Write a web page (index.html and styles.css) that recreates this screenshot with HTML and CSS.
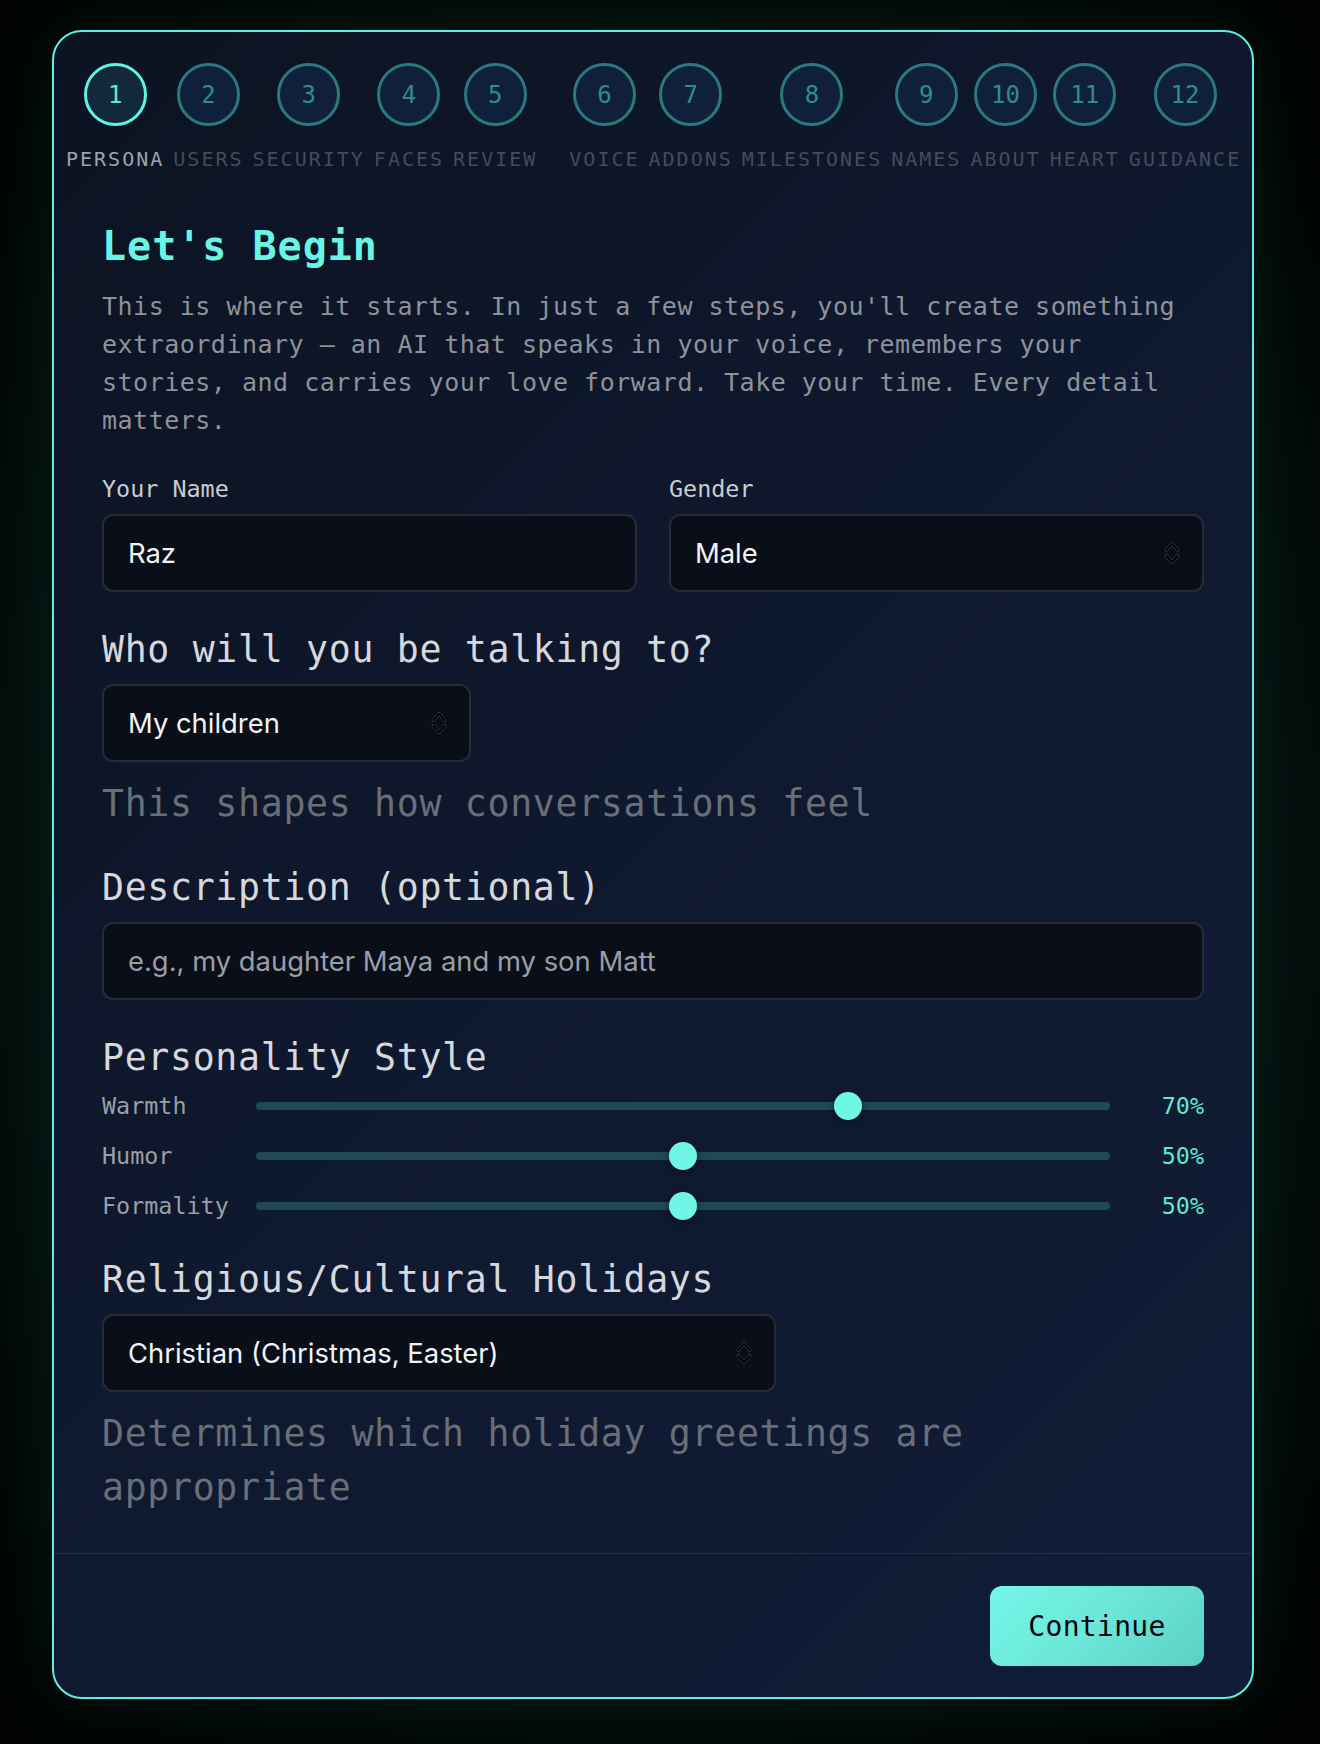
FILE: index.html
```html
<!DOCTYPE html>
<html lang="en">
<head>
<meta charset="utf-8">
<title>Let's Begin</title>
<link rel="stylesheet" href="styles.css">
</head>
<body>
<main class="card">
  <nav class="steps">
    <div class="step is-active"><span class="step-num">1</span><span class="step-label">PERSONA</span></div>
    <div class="step"><span class="step-num">2</span><span class="step-label">USERS</span></div>
    <div class="step"><span class="step-num">3</span><span class="step-label">SECURITY</span></div>
    <div class="step"><span class="step-num">4</span><span class="step-label">FACES</span></div>
    <div class="step"><span class="step-num">5</span><span class="step-label">REVIEW</span></div>
    <div class="step step-break"><span class="step-num">6</span><span class="step-label">VOICE</span></div>
    <div class="step"><span class="step-num">7</span><span class="step-label">ADDONS</span></div>
    <div class="step"><span class="step-num">8</span><span class="step-label">MILESTONES</span></div>
    <div class="step"><span class="step-num">9</span><span class="step-label">NAMES</span></div>
    <div class="step"><span class="step-num">10</span><span class="step-label">ABOUT</span></div>
    <div class="step"><span class="step-num">11</span><span class="step-label">HEART</span></div>
    <div class="step"><span class="step-num">12</span><span class="step-label">GUIDANCE</span></div>
  </nav>

  <section class="content">
    <h1 class="title">Let's Begin</h1>
    <p class="intro">This is where it starts. In just a few steps, you'll create something extraordinary — an AI that speaks in your voice, remembers your stories, and carries your love forward. Take your time. Every detail matters.</p>

    <div class="group name-row">
      <label class="field">
        <span class="field-label">Your Name</span>
        <input class="control" type="text" value="Raz">
      </label>
      <label class="field">
        <span class="field-label">Gender</span>
        <span class="select-wrap">
          <select class="control">
            <option selected>Male</option>
            <option>Female</option>
            <option>Other</option>
          </select>
          <svg class="chev" width="16" height="22" viewBox="0 0 16 22" aria-hidden="true"><path d="M2.4 8.2 L8 1.8 L13.6 8.2 M2.4 13.8 L8 20.2 L13.6 13.8" fill="none" stroke="#454a53" stroke-width="3.2" stroke-linecap="round" stroke-linejoin="round"/><path d="M2.4 8.2 L8 1.8 L13.6 8.2 M2.4 13.8 L8 20.2 L13.6 13.8" fill="none" stroke="#000" stroke-width="2.1" stroke-linecap="round" stroke-linejoin="round"/></svg>
        </span>
      </label>
    </div>

    <div class="group">
      <h2 class="section-title">Who will you be talking to?</h2>
      <span class="select-wrap select-who">
        <select class="control">
          <option selected>My children</option>
          <option>My grandchildren</option>
          <option>My partner or spouse</option>
        </select>
        <svg class="chev" width="16" height="22" viewBox="0 0 16 22" aria-hidden="true"><path d="M2.4 8.2 L8 1.8 L13.6 8.2 M2.4 13.8 L8 20.2 L13.6 13.8" fill="none" stroke="#454a53" stroke-width="3.2" stroke-linecap="round" stroke-linejoin="round"/><path d="M2.4 8.2 L8 1.8 L13.6 8.2 M2.4 13.8 L8 20.2 L13.6 13.8" fill="none" stroke="#000" stroke-width="2.1" stroke-linecap="round" stroke-linejoin="round"/></svg>
      </span>
      <p class="hint">This shapes how conversations feel</p>
    </div>

    <div class="group">
      <h2 class="section-title">Description (optional)</h2>
      <input class="control" type="text" placeholder="e.g., my daughter Maya and my son Matt">
    </div>

    <div class="group">
      <h2 class="section-title">Personality Style</h2>
      <div class="sliders">
        <div class="slider-row">
          <span class="slider-label">Warmth</span>
          <input class="range" type="range" min="0" max="100" value="70">
          <span class="slider-value">70%</span>
        </div>
        <div class="slider-row">
          <span class="slider-label">Humor</span>
          <input class="range" type="range" min="0" max="100" value="50">
          <span class="slider-value">50%</span>
        </div>
        <div class="slider-row">
          <span class="slider-label">Formality</span>
          <input class="range" type="range" min="0" max="100" value="50">
          <span class="slider-value">50%</span>
        </div>
      </div>
    </div>

    <div class="group">
      <h2 class="section-title">Religious/Cultural Holidays</h2>
      <span class="select-wrap select-holidays">
        <select class="control">
          <option selected>Christian (Christmas, Easter)</option>
          <option>Jewish (Hanukkah, Passover)</option>
          <option>Muslim (Eid al-Fitr, Eid al-Adha)</option>
        </select>
        <svg class="chev" width="16" height="22" viewBox="0 0 16 22" aria-hidden="true"><path d="M2.4 8.2 L8 1.8 L13.6 8.2 M2.4 13.8 L8 20.2 L13.6 13.8" fill="none" stroke="#454a53" stroke-width="3.2" stroke-linecap="round" stroke-linejoin="round"/><path d="M2.4 8.2 L8 1.8 L13.6 8.2 M2.4 13.8 L8 20.2 L13.6 13.8" fill="none" stroke="#000" stroke-width="2.1" stroke-linecap="round" stroke-linejoin="round"/></svg>
      </span>
      <p class="hint">Determines which holiday greetings are appropriate</p>
    </div>
  </section>

  <footer class="card-footer">
    <button class="btn-continue" type="button">Continue</button>
  </footer>
</main>
</body>
</html>
```

FILE: styles.css
```css
* {
  box-sizing: border-box;
}

html, body {
  margin: 0;
  padding: 0;
}

body {
  min-height: 1744px;
  padding: 30px 0 45px 52px;
  background:
    radial-gradient(ellipse 70% 60% at 50% 50%, #0a1d19 0%, #051210 55%, #010403 100%);
  font-family: "DejaVu Sans Mono", monospace;
  color: #d4d6da;
}

.card {
  width: 1202px;
  border: 2px solid #63efde;
  border-radius: 30px;
  background: linear-gradient(135deg, #0c1322 0%, #0f1930 55%, #111c37 100%);
  box-shadow: 0 0 70px rgba(40, 200, 170, 0.10);
  overflow: hidden;
}

/* ---------- Steps ---------- */
.steps {
  display: flex;
  align-items: flex-start;
  gap: 9px;
  padding: 31px 12px 0;
}

.step {
  display: flex;
  flex-direction: column;
  align-items: center;
}

.step-break {
  margin-left: 23px;
}

.step-num {
  width: 63px;
  height: 63px;
  border-radius: 50%;
  border: 3px solid #2a7a7d;
  background: #10203a;
  color: #2f8c8c;
  font-size: 24px;
  display: flex;
  align-items: center;
  justify-content: center;
  margin-bottom: 21px;
}

.step-label {
  font-size: 20px;
  line-height: 24px;
  letter-spacing: 2px;
  color: #454b59;
  white-space: nowrap;
}

.is-active .step-num {
  border-color: #5ff3e2;
  background: #13293b;
  color: #5eead4;
}

.is-active .step-label {
  color: #9fa3ab;
}

/* ---------- Content ---------- */
.content {
  padding: 51px 48px 39px;
}

.title {
  margin: 0;
  font-size: 40px;
  line-height: 48px;
  font-weight: 700;
  letter-spacing: 1px;
  color: #6af4e5;
}

.intro {
  margin: 18px 0 0;
  font-size: 25px;
  line-height: 38px;
  letter-spacing: 0.5px;
  color: #8e929a;
}

.group {
  margin-top: 36px;
}

.name-row {
  display: grid;
  grid-template-columns: 1fr 1fr;
  gap: 32px;
}

.field {
  display: flex;
  flex-direction: column;
}

.field-label {
  font-size: 23.4px;
  line-height: 27px;
  color: #c9ccd1;
  margin-bottom: 11px;
}

.control {
  display: block;
  width: 100%;
  height: 78px;
  padding: 0 24px;
  border: 2px solid #272b34;
  border-radius: 11px;
  background: #090e19;
  color: #f2f3f5;
  font-family: Inter, Roboto, sans-serif;
  font-size: 27.4px;
  outline: none;
  -webkit-appearance: none;
  appearance: none;
}

.control::placeholder {
  color: #9a9ea6;
}

.select-wrap {
  position: relative;
  display: block;
}

.select-wrap .control {
  padding-right: 60px;
  cursor: pointer;
}

.chev {
  position: absolute;
  right: 24px;
  top: 50%;
  transform: translateY(-50%);
  pointer-events: none;
}

.select-who {
  width: 369px;
}

.select-holidays {
  width: 674px;
}

.section-title {
  margin: 0;
  font-size: 36.5px;
  line-height: 44px;
  font-weight: 400;
  letter-spacing: 0.7px;
  color: #d6d8dc;
}

.group > .section-title + .select-wrap,
.group > .section-title + .control {
  margin-top: 12px;
}

.hint {
  margin: 15px 0 0;
  font-size: 36.5px;
  line-height: 53.4px;
  letter-spacing: 0.7px;
  color: #6a6e77;
}

/* ---------- Sliders ---------- */
.sliders {
  display: flex;
  flex-direction: column;
  gap: 18px;
  margin-top: 10px;
}

.slider-row {
  display: grid;
  grid-template-columns: 130px 1fr 70px;
  column-gap: 24px;
  align-items: center;
  height: 32px;
}

.slider-label {
  font-size: 23.4px;
  line-height: 27px;
  color: #9b9ea5;
}

.slider-value {
  font-size: 23.4px;
  line-height: 27px;
  color: #5eead4;
  text-align: right;
}

.range {
  -webkit-appearance: none;
  appearance: none;
  width: 100%;
  height: 28px;
  margin: 0;
  background: transparent;
}

.range::-webkit-slider-runnable-track {
  height: 8px;
  border-radius: 4px;
  background: #1f4957;
}

.range::-webkit-slider-thumb {
  -webkit-appearance: none;
  appearance: none;
  width: 28px;
  height: 28px;
  margin-top: -10px;
  border: none;
  border-radius: 50%;
  background: #6ff6e7;
  box-shadow: 0 2px 8px rgba(0, 0, 0, 0.45);
}

/* ---------- Footer ---------- */
.card-footer {
  display: flex;
  justify-content: flex-end;
  padding: 32px 48px 31px;
  border-top: 1px solid #1b3343;
}

.btn-continue {
  width: 214px;
  height: 80px;
  border: none;
  border-radius: 12px;
  background: linear-gradient(135deg, #74f7e8 0%, #6be6d9 50%, #5ccfc3 100%);
  color: #05080d;
  font-family: "DejaVu Sans Mono", monospace;
  font-size: 28px;
  letter-spacing: 0.3px;
  cursor: pointer;
}
```
